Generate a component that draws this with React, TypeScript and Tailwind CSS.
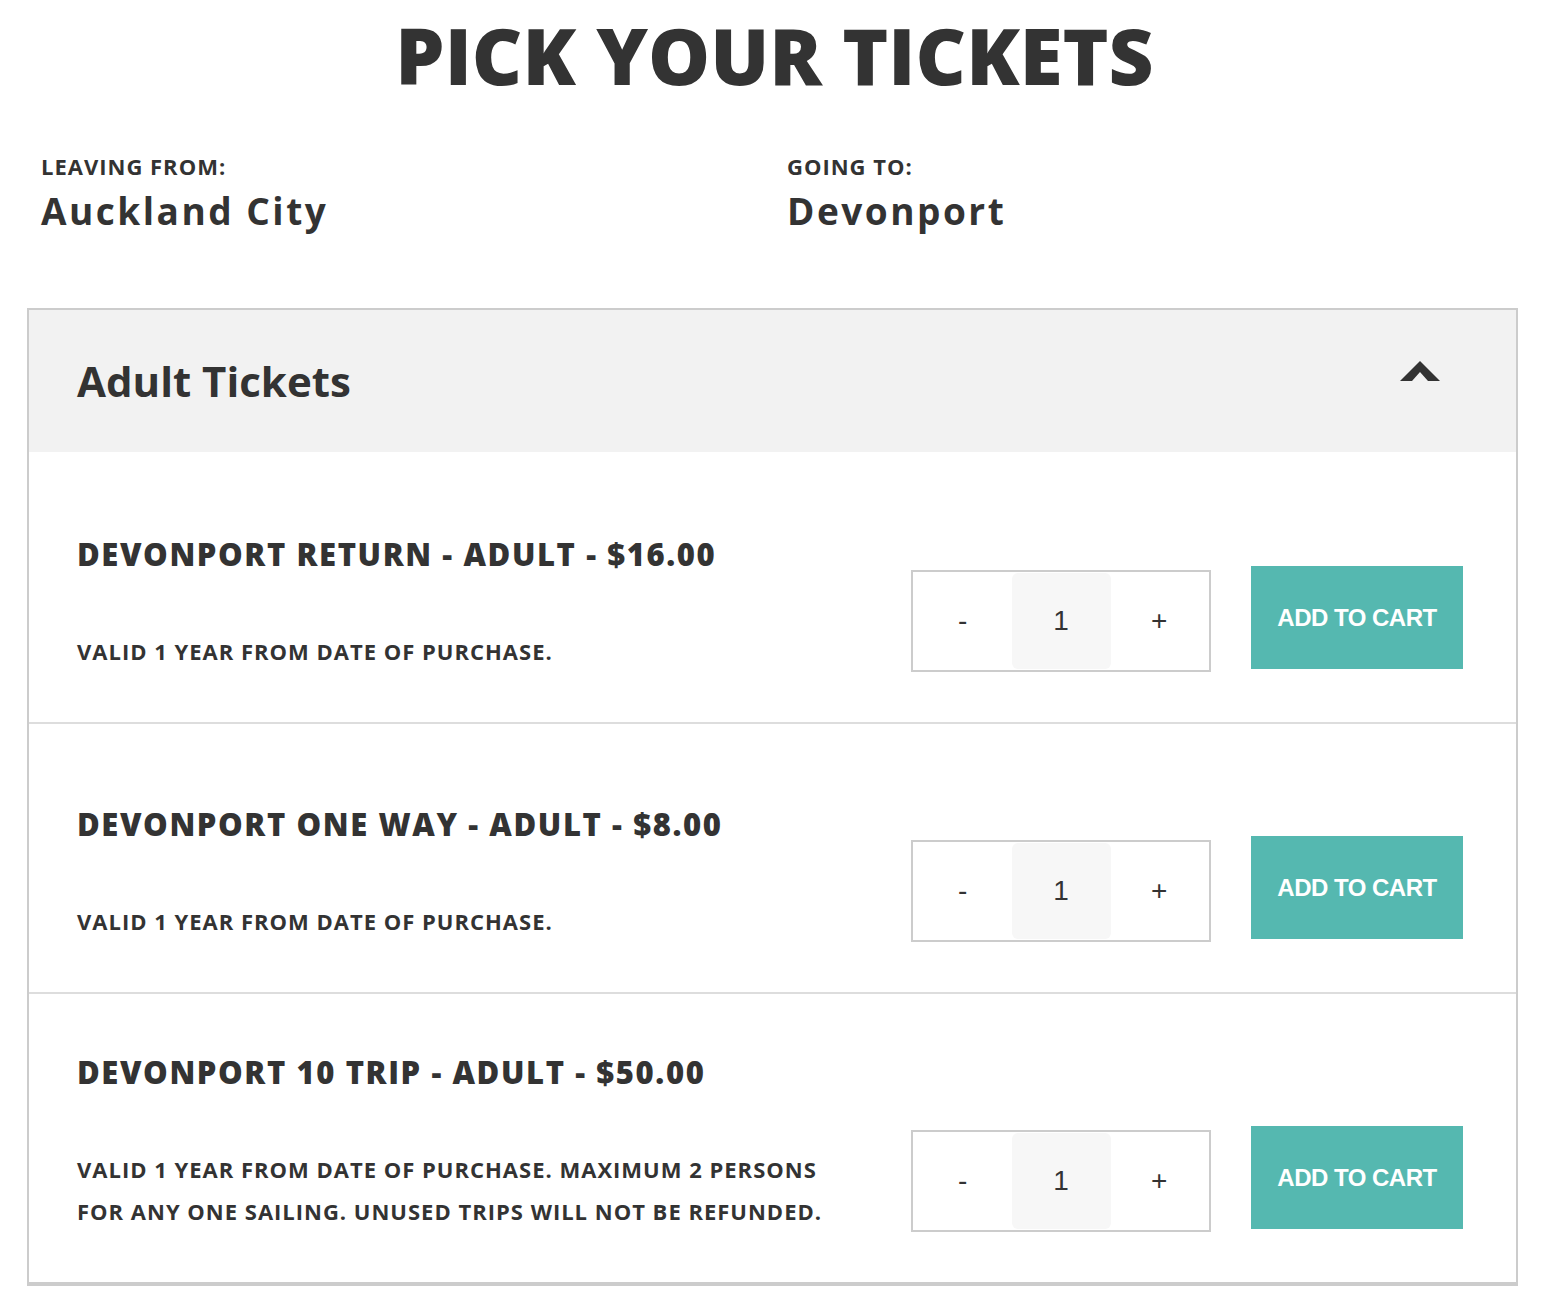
import React from "react";

const tickets = [
  {
    title: "DEVONPORT RETURN - ADULT - $16.00",
    desc: "VALID 1 YEAR FROM DATE OF PURCHASE.",
    pt: "pt-[82px]",
    border: true,
  },
  {
    title: "DEVONPORT ONE WAY - ADULT - $8.00",
    desc: "VALID 1 YEAR FROM DATE OF PURCHASE.",
    pt: "pt-[80px]",
    border: true,
  },
  {
    title: "DEVONPORT 10 TRIP - ADULT - $50.00",
    desc: "VALID 1 YEAR FROM DATE OF PURCHASE. MAXIMUM 2 PERSONS FOR ANY ONE SAILING. UNUSED TRIPS WILL NOT BE REFUNDED.",
    pt: "pt-[58px]",
    border: false,
  },
];

function Qty() {
  return (
    <div className="flex h-[102px] w-[300px] items-stretch border-2 border-[#cccccc] bg-white p-px font-['Liberation_Sans',Arial,sans-serif] text-[28px] text-[#333333]">
      <div className="flex flex-1 items-center justify-center">-</div>
      <div className="flex w-[99px] items-center justify-center rounded-md bg-[#f7f7f7]">1</div>
      <div className="flex flex-1 items-center justify-center">+</div>
    </div>
  );
}

export default function App() {
  return (
    <div className="min-h-[1298px] w-[1549px] bg-white font-['Open_Sans',sans-serif] text-[#333333]">
      <h1 className="pt-[16px] text-center text-[78px] font-extrabold leading-none">PICK YOUR TICKETS</h1>

      <div className="mt-[57px] grid grid-cols-[746px_1fr] pl-[41px]">
        <div>
          <div className="text-[22px] font-bold leading-[30px] tracking-[1px]">LEAVING FROM:</div>
          <div className="mt-[7px] text-[37px] font-bold leading-[46px] tracking-[2.5px]">Auckland City</div>
        </div>
        <div>
          <div className="text-[22px] font-bold leading-[30px] tracking-[1px]">GOING TO:</div>
          <div className="mt-[7px] text-[37px] font-bold leading-[46px] tracking-[2.5px]">Devonport</div>
        </div>
      </div>

      <div className="ml-[27px] mt-[74px] w-[1491px] border-x-2 border-t-2 border-b-4 border-[#cccccc]">
        <div className="flex h-[142px] items-center justify-between bg-[#f2f2f2] pl-[48px] pr-[76px]">
          <div className="text-[42px] font-bold leading-none">Adult Tickets</div>
          <svg width="40" height="20" viewBox="0 0 40 20" className="mb-[20px]">
            <polygon points="0,20 20,0 40,20 28,20 20,11 12,20" fill="#333333" />
          </svg>
        </div>

        {tickets.map((t, i) => (
          <div
            key={i}
            className={`flex items-end justify-between pl-[48px] pr-[53px] pb-[50px] ${t.pt} ${
              t.border ? "border-b-2 border-[#dddddd]" : ""
            }`}
          >
            <div className="w-[770px]">
              <div className="text-[31px] font-extrabold leading-[40px] tracking-[1.6px]">{t.title}</div>
              <div className="mt-[56px] text-[22px] font-bold leading-[42px] tracking-[1px]">{t.desc}</div>
            </div>
            <div className="flex items-end gap-[40px]">
              <Qty />
              <button className="mb-[3px] h-[103px] w-[212px] bg-[#55b8b0] font-['Liberation_Sans',Arial,sans-serif] text-[24px] font-bold tracking-[-0.5px] text-white">
                ADD TO CART
              </button>
            </div>
          </div>
        ))}
      </div>
    </div>
  );
}
